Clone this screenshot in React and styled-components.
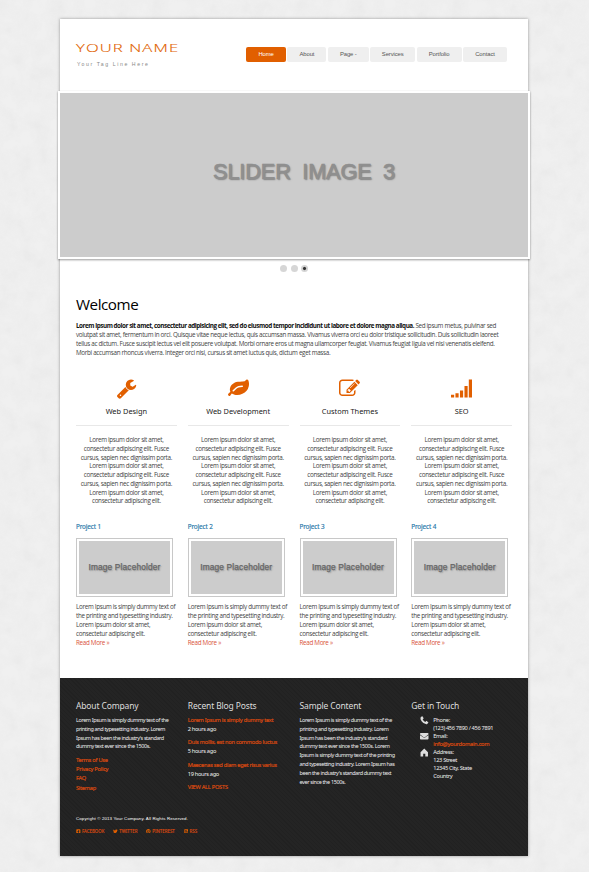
import React from 'react';
import styled, { createGlobalStyle, css } from 'styled-components';
import { FaFacebookSquare, FaTwitter, FaPinterest, FaRssSquare, FaPhoneAlt, FaEnvelope } from 'react-icons/fa';

const orange = '#e15f00';
const noise = `url("data:image/svg+xml,${encodeURIComponent(
  "<svg xmlns='http://www.w3.org/2000/svg' width='300' height='300'><filter id='n' x='0' y='0' width='100%' height='100%'><feTurbulence type='fractalNoise' baseFrequency='.06' numOctaves='5' seed='4' stitchTiles='stitch'/><feColorMatrix values='0 0 0 0 .5  0 0 0 0 .5  0 0 0 0 .5  .17 0 0 0 -.05'/></filter><rect width='300' height='300' filter='url(#n)'/></svg>"
)}")`;

const Global = createGlobalStyle`
  *{box-sizing:border-box}
  html{height:100%;background:#f0f0f0 ${noise}}
  body{margin:0;font-family:"Open Sans",sans-serif;color:#444}
  h1,h2,h3,p,ul{margin:0;padding:0;font-weight:400}
  a{text-decoration:none;color:inherit}
`;
const Screen = styled.div`height:872px;padding:19px 61px 0 60px;overflow:hidden;`;
const Page = styled.main`height:837px;background:#fff;box-shadow:0 0 3px rgba(0,0,0,.38);display:flex;flex-direction:column;`;
const Header = styled.header`height:72px;flex:none;display:flex;justify-content:space-between;padding:0 21px 0 16px;`;
const Brand = styled.div`padding-top:21px;white-space:nowrap;width:110px;`;
const Name = styled.h1`
  font:300 11.7px/15px "Open Sans",sans-serif;color:${orange};letter-spacing:.8px;-webkit-text-stroke:.15px ${orange};
  transform:scaleX(1.42);transform-origin:0 0;
`;
const Tagline = styled.p`font:5.2px/8px "Liberation Sans",sans-serif;color:#888;letter-spacing:1.57px;margin-top:5px;padding-left:1px;`;
const Nav = styled.nav`display:grid;grid-template-columns:40px 39px 41px 45px 45px 44px;column-gap:1.4px;padding-top:28px;`;
const NavItem = styled.a`
  height:15px;border-radius:2px;text-align:center;font:5.9px/14px "Liberation Sans",sans-serif;letter-spacing:-.1px;
  background:${p => (p.$active ? orange : '#efefef')};color:${p => (p.$active ? '#fff' : '#555')};
`;
const Slider = styled.section`
  height:168px;flex:none;margin:0 -2px;border:2px solid #fff;background:#ccc;box-shadow:0 1px 2px rgba(0,0,0,.4);
  display:flex;align-items:center;justify-content:center;
  font:21.6px/26px "Liberation Sans",sans-serif;color:#8f8f8f;-webkit-text-stroke:.7px #8f8f8f;
  letter-spacing:-.05px;word-spacing:5.5px;text-shadow:1px 1px 1.5px #7c7c7c;padding:0 0 6px 20px;white-space:nowrap;
`;
const Dots = styled.div`height:19px;flex:none;display:flex;justify-content:center;align-items:center;gap:3.5px;`;
const Dot = styled.span`
  width:7px;height:7px;border-radius:50%;
  background:${p => (p.$active ? 'radial-gradient(circle,#333 0 1px,#d4d4d4 2.1px)' : '#d6d6d6')};
`;
const Content = styled.div`height:400px;flex:none;padding:0 16px;`;
const Title = styled.h2`font:15.2px/22px "Open Sans",sans-serif;letter-spacing:-.45px;color:#000;padding-top:15px;height:43px;`;
const Intro = styled.div`height:57px;`;
const Line = styled.div`
  font-size:6.3px;line-height:${p => p.$lh || 9}px;white-space:nowrap;letter-spacing:-.32px;
  ${p => p.$center && css`text-align:center;`}
`;
const Strong = styled.b`color:#111;letter-spacing:-.44px;`;
const Grid = styled.div`display:grid;grid-template-columns:repeat(4,100.75px);column-gap:11px;`;
const FeatureHead = styled.div`
  height:48px;border-bottom:1px solid #e8e8e8;display:flex;flex-direction:column;align-items:center;
`;
const Icon = styled.svg`width:21px;height:21px;fill:${orange};display:block;`;
const FeatureTitle = styled.h3`font:7.4px/10px "Noto Sans",sans-serif;color:#222;margin-top:7px;white-space:nowrap;`;
const FeatureText = styled.div`padding-top:10px;height:96px;`;
const ProjectTitle = styled.h3`font:6.3px/9px "Noto Sans",sans-serif;letter-spacing:-.1px;color:#1f76a8;-webkit-text-stroke:.15px #1f76a8;height:16px;`;
const Thumb = styled.div`
  width:97px;height:59px;border:1px solid #c8c8c8;padding:2px;margin-bottom:5px;
`;
const ThumbFill = styled.div`
  height:100%;background:#ccc;display:flex;align-items:center;justify-content:center;padding-bottom:1px;
  font:8.3px/10px "Liberation Sans",sans-serif;letter-spacing:.17px;color:#666;-webkit-text-stroke:.25px #666;text-shadow:1px 1px 1.5px #888;white-space:nowrap;
`;
const More = styled.a`color:#d9533a;`;
const Footer = styled.footer`
  height:178px;flex:none;margin-top:auto;padding:22px 16px 0;color:#eee;
  background:#222 repeating-linear-gradient(45deg,#212121 0 1px,#242424 1px 3px);
`;
const FootGrid = styled(Grid)`height:115px;`;
const FootTitle = styled.h3`font:8.5px/12px "Noto Sans",sans-serif;letter-spacing:-.15px;color:#ddd;margin-bottom:4px;white-space:nowrap;`;
const Small = styled.div`
  font:5.7px/8.8px "Noto Sans",sans-serif;white-space:nowrap;letter-spacing:-.33px;color:#eee;
  margin-top:${p => p.$mt || 0}px;
`;
const Copy = styled(Small)`font-size:5.5px;letter-spacing:-.4px;word-spacing:.1px;`;
const FootLink = styled(Small)`color:#d94a10;letter-spacing:-.26px;-webkit-text-stroke:.2px #d94a10;`;
const Contact = styled.ul`list-style:none;padding-left:9px;`;
const ContactRow = styled.li`display:grid;grid-template-columns:13px 1fr;line-height:8px;svg{width:8.5px;height:8.5px;fill:#ddd;}`;
const ContactText = styled(Small)`line-height:8px;`;
const ContactLink = styled(FootLink)`line-height:8px;`;
const Copyright = styled.p`font:4.4px/6px "Liberation Sans",sans-serif;letter-spacing:.12px;color:#fff;white-space:nowrap;padding-top:1px;`;
const Social = styled.div`display:flex;margin-top:6px;gap:9px;color:#d94a10;`;
const SocialLink = styled.a`display:flex;align-items:center;gap:1.2px;font:4.4px/6px "Noto Sans",sans-serif;-webkit-text-stroke:.15px #d94a10;svg{width:4.7px;height:4.7px;color:${orange};}`;

const paths = {
  wrench: 'M448 1472q0-26-19-45t-45-19-45 19-19 45 19 45 45 19 45-19 19-45zm644-420l-682 682q-37 37-90 37-52 0-91-37l-106-108q-38-36-38-90 0-53 38-91l681-681q39 98 114.5 173.5t173.5 114.5zm634-435q0 39-23 106-47 134-164.5 217.5t-258.5 83.5q-185 0-316.5-131.5t-131.5-316.5 131.5-316.5 316.5-131.5q58 0 121.5 16.5t107.5 46.5q16 11 16 28t-16 28l-293 169v224l193 107q5-3 79-48.5t135.5-81 70.5-35.5q15 0 23.5 10t8.5 25z',
  leaf: 'M1280 704q0-26-19-45t-45-19q-172 0-318 49.5t-259.5 134-235.5 219.5q-19 21-19 45 0 26 19 45t45 19q24 0 45-19 27-24 74-71t67-66q137-124 268.5-176t313.5-52q26 0 45-19t19-45zm512-198q0 95-20 193-46 224-184.5 383t-357.5 268q-214 108-438 108-148 0-286-47-15-5-88-42t-96-37q-16 0-39.5 32t-45 70-52.5 70-60 32q-43 0-63.5-17.5t-45.5-59.5q-2-4-6-11t-5.5-10-3-9.5-1.5-13.5q0-35 31-73.5t68-65.5 68-56 31-48q0-4-14-38t-16-44q-9-51-9-104 0-115 43.5-220t119-184.5 170.5-139 204-95.5q55-18 145-25.5t179.5-9 178.5-6 163.5-24 113.5-56.5l29.5-29.5 29.5-28 27-20 36.5-16 43.5-4.5q39 0 70.5 46t47.5 112 24 124 8 96z',
  edit: 'M888 1184l116-116-152-152-116 116v56h96v96h56zm440-720q-16-16-33 1l-350 350q-17 17-1 33t33-1l350-350q17-17 1-33zm80 594v190q0 119-84.5 203.5t-203.5 84.5h-832q-119 0-203.5-84.5t-84.5-203.5v-832q0-119 84.5-203.5t203.5-84.5h832q63 0 117 25 15 7 18 23 3 17-9 29l-49 49q-14 14-32 8-23-6-45-6h-832q-66 0-113 47t-47 113v832q0 66 47 113t113 47h832q66 0 113-47t47-113v-126q0-13 9-22l64-64q15-15 35-7t20 29zm-96-738l288 288-672 672h-288v-288zm444 132l-92 92-288-288 92-92q28-28 68-28t68 28l152 152q28 28 28 68t-28 68z',
  signal: 'M0 1420h270v250H0zM380 1300h270v370H380zM765 1060h270v610H765zM1150 680h270v990H1150zM1520 130h272v1540H1520z',
};
const features = [['Web Design', 'wrench'], ['Web Development', 'leaf'], ['Custom Themes', 'edit'], ['SEO', 'signal']];
const featureLines = [
  'Lorem ipsum dolor sit amet,', 'consectetur adipiscing elit. Fusce', 'cursus, sapien nec dignissim porta.',
  'Lorem ipsum dolor sit amet,', 'consectetur adipiscing elit. Fusce', 'cursus, sapien nec dignissim porta.',
  'Lorem ipsum dolor sit amet,', 'consectetur adipiscing elit.',
];
const projectLines = ['Lorem Ipsum is simply dummy text of', 'the printing and typesetting industry.', 'Lorem ipsum dolor sit amet,', 'consectetur adipiscing elit.'];
const about = ['Lorem Ipsum is simply dummy text of the', 'printing and typesetting industry. Lorem', "Ipsum has been the industry's standard", 'dummy text ever since the 1500s.'];
const sample = ['Lorem Ipsum is simply dummy text of the', 'printing and typesetting industry. Lorem', "Ipsum has been the industry's standard", 'dummy text ever since the 1500s. Lorem', 'Ipsum is simply dummy text of the printing', 'and typesetting industry. Lorem Ipsum has', "been the industry's standard dummy text", 'ever since the 1500s.'];
const posts = [['Lorem Ipsum is simply dummy text', '2 hours ago'], ['Duis mollis, est non commodo luctus', '5 hours ago'], ['Maecenas sed diam eget risus varius', '19 hours ago']];

export default function App() {
  return (
    <Screen>
      <Global />
      <Page>
        <Header>
          <Brand><Name>YOUR NAME</Name><Tagline>Your Tag Line Here</Tagline></Brand>
          <Nav>
            {['Home', 'About', 'Page -', 'Services', 'Portfolio', 'Contact'].map((t, i) => <NavItem key={t} href="#" $active={i === 0}>{t}</NavItem>)}
          </Nav>
        </Header>
        <Slider>SLIDER IMAGE 3</Slider>
        <Dots><Dot /><Dot /><Dot $active /></Dots>
        <Content>
          <Title>Welcome</Title>
          <Intro>
            <Line><Strong>Lorem ipsum dolor sit amet, consectetur adipisicing elit, sed do eiusmod tempor incididunt ut labore et dolore magna aliqua.</Strong> Sed ipsum metus, pulvinar sed</Line>
            <Line>volutpat sit amet, fermentum in orci. Quisque vitae neque lectus, quis accumsan massa. Vivamus viverra orci eu dolor tristique sollicitudin. Duis sollicitudin laoreet</Line>
            <Line>tellus ac dictum. Fusce suscipit lectus vel elit posuere volutpat. Morbi ornare eros ut magna ullamcorper feugiat. Vivamus feugiat ligula vel nisi venenatis eleifend.</Line>
            <Line>Morbi accumsan rhoncus viverra. Integer orci nisi, cursus sit amet luctus quis, dictum eget massa.</Line>
          </Intro>
          <Grid>
            {features.map(([t, icon]) => (
              <article key={t}>
                <FeatureHead>
                  <Icon viewBox="0 0 1792 1792"><path d={paths[icon]} /></Icon>
                  <FeatureTitle>{t}</FeatureTitle>
                </FeatureHead>
                <FeatureText>{featureLines.map((l, i) => <Line key={i} $center $lh={8.75}>{l}</Line>)}</FeatureText>
              </article>
            ))}
          </Grid>
          <Grid>
            {[1, 2, 3, 4].map(n => (
              <article key={n}>
                <ProjectTitle>Project {n}</ProjectTitle>
                <Thumb><ThumbFill>Image Placeholder</ThumbFill></Thumb>
                {projectLines.map(l => <Line key={l}>{l}</Line>)}
                <Line><More href="#">Read More »</More></Line>
              </article>
            ))}
          </Grid>
        </Content>
        <Footer>
          <FootGrid>
            <section>
              <FootTitle>About Company</FootTitle>
              {about.map(l => <Copy key={l}>{l}</Copy>)}
              <FootLink $mt={5}>Terms of Use</FootLink><FootLink>Privacy Policy</FootLink><FootLink>FAQ</FootLink><FootLink $mt={1}>Sitemap</FootLink>
            </section>
            <section>
              <FootTitle>Recent Blog Posts</FootTitle>
              {posts.map(([t, time], i) => <React.Fragment key={t}><FootLink $mt={i ? 4.8 : 0}>{t}</FootLink><Small>{time}</Small></React.Fragment>)}
              <FootLink $mt={5}>VIEW ALL POSTS</FootLink>
            </section>
            <section>
              <FootTitle>Sample Content</FootTitle>
              {sample.map(l => <Copy key={l}>{l}</Copy>)}
            </section>
            <section>
              <FootTitle>Get in Touch</FootTitle>
              <Contact>
                <ContactRow><svg viewBox="0 0 16 16"><path d="M1 3 4 0l3 4-2 2.5Q7 10 10 11.5L12 9l4 3-3 3.5Q7 16 3 10 0 6 1 3z" /></svg><div><ContactText>Phone:</ContactText><ContactText>(123) 456 7890 / 456 7891</ContactText></div></ContactRow>
                <ContactRow><FaEnvelope /><div><ContactText>Email:</ContactText><ContactLink>info@yourdomain.com</ContactLink></div></ContactRow>
                <ContactRow><svg viewBox="0 0 16 16"><path d="M8 1 15 8v8h-5v-5H6v5H1V8z" /></svg><div><ContactText>Address:</ContactText><ContactText>123 Street</ContactText><ContactText>12345 City, State</ContactText><ContactText>Country</ContactText></div></ContactRow>
              </Contact>
            </section>
          </FootGrid>
          <Copyright>Copyright © 2013 Your Company. All Rights Reserved.</Copyright>
          <Social>
            <SocialLink href="#"><FaFacebookSquare />FACEBOOK</SocialLink>
            <SocialLink href="#"><FaTwitter />TWITTER</SocialLink>
            <SocialLink href="#"><FaPinterest />PINTEREST</SocialLink>
            <SocialLink href="#"><FaRssSquare />RSS</SocialLink>
          </Social>
        </Footer>
      </Page>
    </Screen>
  );
}
